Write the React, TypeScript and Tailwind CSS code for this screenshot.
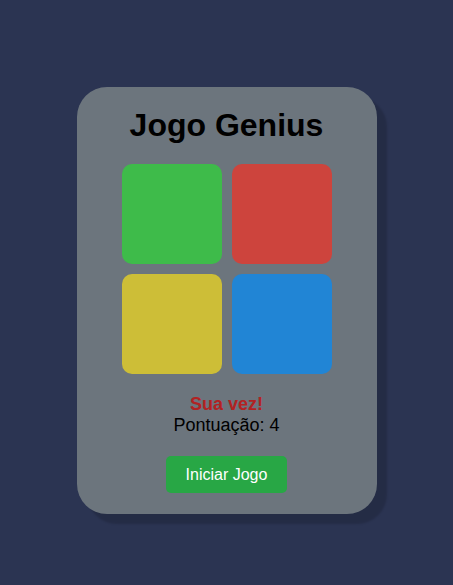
export default function App() {
  return (
    <div
      className="min-h-[585px] w-full bg-[#2b3452] flex justify-center pt-[87px]"
      style={{ fontFamily: '"Liberation Sans", Arial, sans-serif' }}
    >
      <div className="w-[300px] h-[427px] bg-[#6c757d] rounded-[30px] shadow-[10px_10px_2px_rgba(0,0,0,0.15)] pt-[20px] flex flex-col items-center">
        <h1 className="text-[32px] leading-[37px] font-bold text-black m-0">Jogo Genius</h1>
        <div className="grid grid-cols-[100px_100px] gap-[10px] mt-[20px]">
          <div className="w-[100px] h-[100px] rounded-[10px] bg-[#3ebb4a]" />
          <div className="w-[100px] h-[100px] rounded-[10px] bg-[#cd443d]" />
          <div className="w-[100px] h-[100px] rounded-[10px] bg-[#cdbe37]" />
          <div className="w-[100px] h-[100px] rounded-[10px] bg-[#2185d5]" />
        </div>
        <div className="mt-[20px] text-[18px] leading-[21px] font-bold text-[#b22222]">Sua vez!</div>
        <div className="text-[18px] leading-[21px] text-black">Pontuação: 4</div>
        <button className="mt-[20px] w-[121px] h-[37px] bg-[#28a745] text-white text-[16px] rounded-[5px] border-0">
          Iniciar Jogo
        </button>
      </div>
    </div>
  );
}
